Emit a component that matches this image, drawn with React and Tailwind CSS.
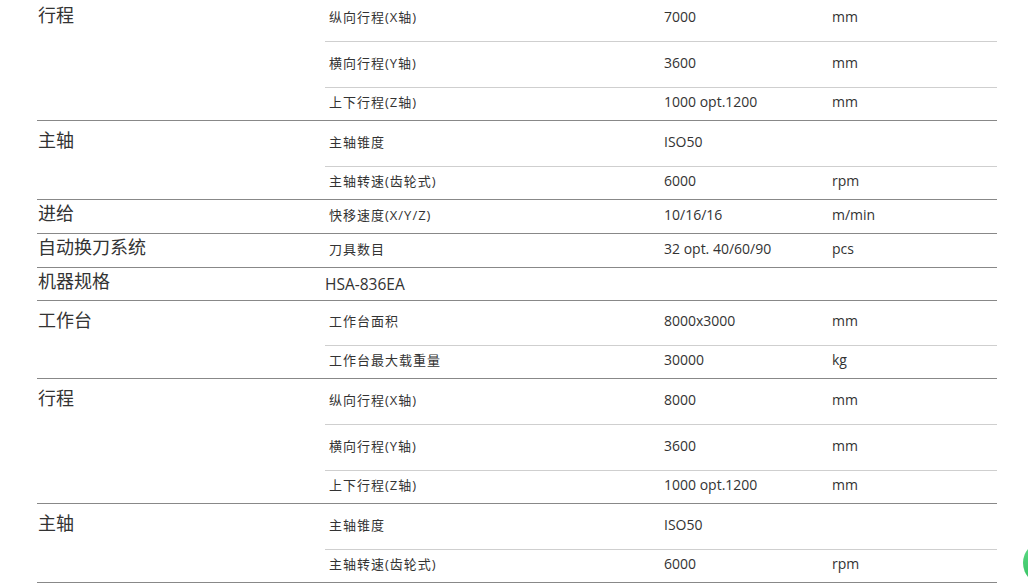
const groups = [
  {
    title: '行程',
    rows: [
      ['纵向行程(X轴)', '7000', 'mm'],
      ['横向行程(Y轴)', '3600', 'mm'],
      ['上下行程(Z轴)', '1000 opt.1200', 'mm'],
    ],
  },
  {
    title: '主轴',
    rows: [
      ['主轴锥度', 'ISO50', ''],
      ['主轴转速(齿轮式)', '6000', 'rpm'],
    ],
  },
  { title: '进给', rows: [['快移速度(X/Y/Z)', '10/16/16', 'm/min']] },
  { title: '自动换刀系统', rows: [['刀具数目', '32 opt. 40/60/90', 'pcs']] },
  { title: '机器规格', model: 'HSA-836EA' },
  {
    title: '工作台',
    tight: true,
    rows: [
      ['工作台面积', '8000x3000', 'mm'],
      ['工作台最大载重量', '30000', 'kg'],
    ],
  },
  {
    title: '行程',
    rows: [
      ['纵向行程(X轴)', '8000', 'mm'],
      ['横向行程(Y轴)', '3600', 'mm'],
      ['上下行程(Z轴)', '1000 opt.1200', 'mm'],
    ],
  },
  {
    title: '主轴',
    rows: [
      ['主轴锥度', 'ISO50', ''],
      ['主轴转速(齿轮式)', '6000', 'rpm'],
    ],
  },
]

function SubRow({ row, last, single, tight }) {
  const [label, value, unit] = row
  let box = 'h-[46px] pt-[12px] border-b border-[#cfcfcf]'
  if (tight && !last) box = 'h-[45px] pt-[11px] border-b border-[#cfcfcf]'
  if (last) box = 'h-[32px] pt-[5px]'
  if (single) box = 'h-[33px] pt-[6px]'
  return (
    <div className={`flex leading-[18px] text-[#333] ${box}`}>
      <div className="w-[339px] pl-[4px] text-[13px] tracking-[1px]">{label}</div>
      <div className="w-[168px] text-[14px]">{value}</div>
      <div className="text-[14px]">{unit}</div>
    </div>
  )
}

export default function App() {
  return (
    <div
      className="relative w-[1028px] h-[585px] overflow-hidden bg-white"
      style={{ fontFamily: '"Open Sans", "Noto Sans CJK SC", sans-serif' }}
    >
      <div className="ml-[37px] mt-[-4px] w-[960px]">
        {groups.map((g, i) => {
          const single = !g.rows || g.rows.length === 1
          return (
            <div key={i} className="flex border-b border-[#888]">
              <div
                className={`w-[288px] pl-[1px] text-[18px] leading-[24px] text-[#333] ${
                  single ? 'pt-[1px]' : 'pt-[7px]'
                }`}
              >
                {g.title}
              </div>
              <div className="flex-1">
                {g.model ? (
                  <div className="h-[32px] pt-[6px] text-[15.5px] leading-[20px] text-[#333]">{g.model}</div>
                ) : (
                  g.rows.map((r, j) => (
                    <SubRow
                      key={j}
                      row={r}
                      last={j === g.rows.length - 1}
                      single={single}
                      tight={g.tight}
                    />
                  ))
                )}
              </div>
            </div>
          )
        })}
      </div>

      {/* floating chat button, mostly off screen */}
      <div className="absolute left-[1023px] top-[541px] w-[44px] h-[44px] rounded-full bg-gradient-to-b from-[#5fdc86] to-[#2fc060]" />
    </div>
  )
}
